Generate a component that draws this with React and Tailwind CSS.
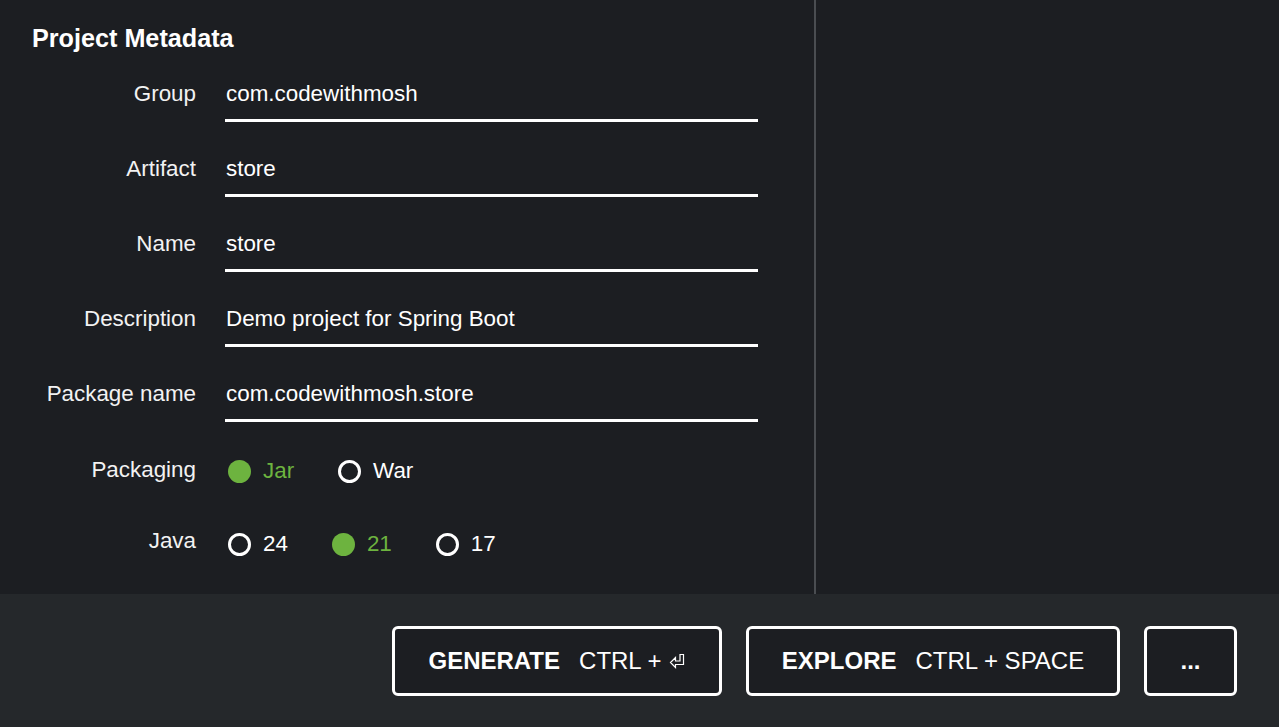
import React, { useState } from 'react';

const fields = [
  { label: 'Group', value: 'com.codewithmosh' },
  { label: 'Artifact', value: 'store' },
  { label: 'Name', value: 'store' },
  { label: 'Description', value: 'Demo project for Spring Boot' },
  { label: 'Package name', value: 'com.codewithmosh.store' },
];

const Radio = ({ label, checked, onClick }) => (
  <button onClick={onClick} className="flex items-center gap-[12px] mr-[44px]">
    <span
      className={
        checked
          ? 'w-[23px] h-[23px] rounded-full bg-[#6db33f]'
          : 'w-[23px] h-[23px] rounded-full border-[3px] border-white'
      }
    />
    <span className={checked ? 'text-[#6db33f]' : 'text-white'}>{label}</span>
  </button>
);

const EnterIcon = () => (
  <svg width="17" height="16" viewBox="0 0 17 16" className="ml-[7px]">
    <path
      d="M11 1.5 H14.5 V11.5 H6.5 V14.5 L1.5 9.5 L6.5 4.5 V8 H11 Z"
      fill="none"
      stroke="white"
      strokeWidth="1.2"
      strokeLinejoin="miter"
    />
  </svg>
);

const App = () => {
  const [packaging, setPackaging] = useState('Jar');
  const [java, setJava] = useState('21');

  return (
    <div className="h-[727px] w-[1279px] flex flex-col bg-[#1c1e22] text-white font-['Liberation_Sans',Arial,sans-serif] overflow-hidden">
      <div className="flex flex-1">
        <div className="w-[816px] border-r-2 border-[#4a4d51] pt-[23px]">
          <h2 className="pl-[32px] text-[25.2px] leading-[30px] font-bold mb-[16px]">Project Metadata</h2>

          {fields.map((f) => (
            <div key={f.label} className="flex mb-[22px]">
              <div className="w-[196px] text-right text-[22.4px] leading-[28px] pt-[11px] text-[#f2f2f2]">{f.label}</div>
              <div className="ml-[29px] w-[533px] h-[53px] border-b-[3px] border-white pt-[11px] pl-[1px] text-[22.4px] leading-[28px]">
                {f.value}
              </div>
            </div>
          ))}

          <div className="flex text-[22.4px] leading-[28px] h-[72px]">
            <div className="w-[196px] text-right pt-[12px] text-[#f2f2f2]">Packaging</div>
            <div className="ml-[32px] pt-[13px] flex items-start">
              {['Jar', 'War'].map((p) => (
                <Radio key={p} label={p} checked={packaging === p} onClick={() => setPackaging(p)} />
              ))}
            </div>
          </div>

          <div className="flex text-[22.4px] leading-[28px]">
            <div className="w-[196px] text-right pt-[11px] text-[#f2f2f2]">Java</div>
            <div className="ml-[32px] pt-[14px] flex items-start">
              {['24', '21', '17'].map((v) => (
                <Radio key={v} label={v} checked={java === v} onClick={() => setJava(v)} />
              ))}
            </div>
          </div>
        </div>
        <div className="flex-1" />
      </div>

      <footer className="h-[133px] bg-[#25282b] flex items-center justify-end gap-[24px] pr-[42px] text-[24px]">
        <button className="w-[330px] h-[70px] border-[3px] border-white rounded-[6px] bg-[#1c1e22] flex items-center justify-center">
          <span className="font-bold">GENERATE</span>
          <span className="ml-[19px]">CTRL +</span>
          <EnterIcon />
        </button>
        <button className="w-[374px] h-[70px] border-[3px] border-white rounded-[6px] bg-[#1c1e22] flex items-center justify-center">
          <span className="font-bold">EXPLORE</span>
          <span className="ml-[19px]">CTRL + SPACE</span>
        </button>
        <button className="w-[93px] h-[70px] border-[3px] border-white rounded-[6px] bg-[#1c1e22] flex items-center justify-center font-bold">
          ...
        </button>
      </footer>
    </div>
  );
};

export default App;
